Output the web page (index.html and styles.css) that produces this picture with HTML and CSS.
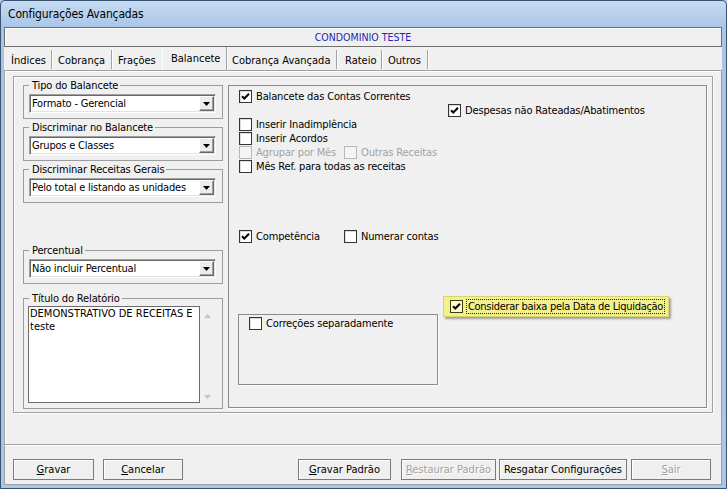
FILE: index.html
```html
<!DOCTYPE html>
<html lang="pt-BR">
<head>
<meta charset="utf-8">
<title>Configurações Avançadas</title>
<link rel="stylesheet" href="styles.css">
</head>
<body>
<div class="window">
  <div class="titlebar">Configurações Avançadas</div>
  <div class="client">
    <div class="company">CONDOMINIO TESTE</div>
    <div class="tabs">
      <div class="tab t-indices">Índices</div>
      <div class="tab t-cobranca">Cobrança</div>
      <div class="tab t-fracoes">Frações</div>
      <div class="tab t-balancete active">Balancete</div>
      <div class="tab t-cobav">Cobrança Avançada</div>
      <div class="tab t-rateio">Rateio</div>
      <div class="tab t-outros">Outros</div>
    </div>
    <div class="page">
      <div class="frame">
        <div class="leftcol">
          <fieldset class="group">
            <legend>Tipo do Balancete</legend>
            <div class="combo"><span class="combo-text">Formato - Gerencial</span><span class="combo-btn"><svg width="7" height="4" viewBox="0 0 7 4"><path d="M0 0h7L3.5 4z" fill="#000"/></svg></span></div>
          </fieldset>
          <fieldset class="group">
            <legend>Discriminar no Balancete</legend>
            <div class="combo"><span class="combo-text">Grupos e Classes</span><span class="combo-btn"><svg width="7" height="4" viewBox="0 0 7 4"><path d="M0 0h7L3.5 4z" fill="#000"/></svg></span></div>
          </fieldset>
          <fieldset class="group">
            <legend>Discriminar Receitas Gerais</legend>
            <div class="combo"><span class="combo-text">Pelo total e listando as unidades</span><span class="combo-btn"><svg width="7" height="4" viewBox="0 0 7 4"><path d="M0 0h7L3.5 4z" fill="#000"/></svg></span></div>
          </fieldset>
          <fieldset class="group g-percentual">
            <legend>Percentual</legend>
            <div class="combo"><span class="combo-text">Não incluir Percentual</span><span class="combo-btn"><svg width="7" height="4" viewBox="0 0 7 4"><path d="M0 0h7L3.5 4z" fill="#000"/></svg></span></div>
          </fieldset>
          <fieldset class="group g-titulo">
            <legend>Título do Relatório</legend>
            <div class="memo">
              <div class="memo-text">
                <div>DEMONSTRATIVO DE RECEITAS E</div>
                <div>teste</div>
              </div>
              <div class="memo-scroll">
                <svg width="7" height="4" viewBox="0 0 7 4"><path d="M0 4h7L3.5 0z" fill="#c4c4c4"/></svg>
                <svg width="7" height="4" viewBox="0 0 7 4"><path d="M0 0h7L3.5 4z" fill="#c4c4c4"/></svg>
              </div>
            </div>
          </fieldset>
        </div>
        <div class="panel">
          <div class="cbrow"><span class="cb"><svg width="11" height="11" viewBox="0 0 11 11"><path d="M2 5.2L4.3 7.5L9 2.8" stroke="#000" stroke-width="2" fill="none"/></svg></span>Balancete das Contas Correntes</div>
          <div class="cbrow ind"><span class="cb"><svg width="11" height="11" viewBox="0 0 11 11"><path d="M2 5.2L4.3 7.5L9 2.8" stroke="#000" stroke-width="2" fill="none"/></svg></span>Despesas não Rateadas/Abatimentos</div>
          <div class="cbrow"><span class="cb"></span>Inserir Inadimplência</div>
          <div class="cbrow"><span class="cb"></span>Inserir Acordos</div>
          <div class="cbrow disabled"><span class="item w105"><span class="cb"></span>Agrupar por Mês</span><span class="item"><span class="cb"></span>Outras Receitas</span></div>
          <div class="cbrow"><span class="cb"></span>Mês Ref. para todas as receitas</div>
          <div class="cbrow r-comp"><span class="item w105"><span class="cb"><svg width="11" height="11" viewBox="0 0 11 11"><path d="M2 5.2L4.3 7.5L9 2.8" stroke="#000" stroke-width="2" fill="none"/></svg></span>Competência</span><span class="item"><span class="cb"></span>Numerar contas</span></div>
          <div class="bottomrow">
            <div class="subgroup">
              <div class="cbrow"><span class="cb"></span>Correções separadamente</div>
            </div>
            <div class="focusbox">
              <span class="cb cb-focus"><svg width="11" height="11" viewBox="0 0 11 11"><path d="M2 5.2L4.3 7.5L9 2.8" stroke="#000" stroke-width="2" fill="none"/></svg></span><span class="focustext">Considerar baixa pela Data de Liquidação</span>
            </div>
          </div>
        </div>
      </div>
    </div>
    <div class="bar">
      <div class="btn b-gravar"><span><u>G</u>ravar</span></div>
      <div class="btn b-cancelar"><span><u>C</u>ancelar</span></div>
      <div class="btn b-gpadrao"><span><u>G</u>ravar Padrão</span></div>
      <div class="btn b-restaurar disabled"><span><u>R</u>estaurar Padrão</span></div>
      <div class="btn b-resgatar"><span>Resgatar Configurações</span></div>
      <div class="btn b-sair disabled"><span><u>S</u>air</span></div>
    </div>
  </div>
</div>
</body>
</html>
```

FILE: styles.css
```css
* { box-sizing: border-box; }
html, body { margin: 0; padding: 0; }
body {
  width: 727px;
  height: 489px;
  overflow: hidden;
  font-family: "DejaVu Sans Condensed", "Liberation Sans", sans-serif;
  font-size: 11px;
  letter-spacing: -0.15px;
  color: #000;
  background: #a9c6e8;
}
.window {
  width: 727px;
  height: 489px;
  border: 1px solid #3a5573;
  border-radius: 5px 5px 0 0;
  background: linear-gradient(#c7dbf1 0, #a8c5e8 27px, #a9c6e8 100%);
  padding: 0 4px 3px 3px;
  display: flex;
  flex-direction: column;
}
.titlebar {
  height: 26px;
  flex: none;
  display: flex;
  align-items: center;
  padding-left: 4px;
  font-size: 12px;
}
.client {
  flex: 1;
  background: #f0f0f0;
  display: flex;
  flex-direction: column;
}
.company {
  height: 20px;
  flex: none;
  border: 1px solid #6f6f6f;
  box-shadow: inset 1px 1px 0 #fff;
  display: flex;
  align-items: center;
  justify-content: center;
  color: #2626b4;
  font-size: 10.5px;
  letter-spacing: 0;
}
.tabs {
  height: 23px;
  flex: none;
  display: flex;
  align-items: flex-end;
  padding-left: 1px;
}
.tab {
  height: 19px;
  line-height: 19px;
  padding-top: 1px;
  white-space: nowrap;
  overflow: hidden;
  border-right: 1px solid #a0a0a0;
  box-shadow: 1px 0 0 #fff;
  margin-bottom: 1px;
  letter-spacing: 0;
}
.t-indices { width: 47px; padding-left: 6px; }
.t-cobranca { width: 60px; padding-left: 6px; }
.t-fracoes { width: 50px; padding-left: 6px; border-right: none; box-shadow: none; }
.t-balancete { width: 65px; padding-left: 9px; }
.tab.active { height: 23px; line-height: 21px; margin-bottom: 0; border-left: 1px solid #fff; padding-left: 8px; }
.t-cobav { width: 110px; padding-left: 5px; }
.t-rateio { width: 45px; padding-left: 8px; }
.t-outros { width: 46px; padding-left: 6px; }

.page {
  height: 375px;
  flex: none;
  border: 1px solid #a0a0a0;
  box-shadow: inset 1px 1px 0 #fff;
  padding: 5px 0 0 8px;
}
.frame {
  width: 700px;
  height: 337px;
  border: 1px solid #a0a0a0;
  box-shadow: inset 1px 1px 0 #fff, 1px 1px 0 #fff;
  display: grid;
  grid-template-columns: 200px 479px;
  column-gap: 5px;
  padding: 2px 5px 3px 9px;
  align-items: start;
}
.leftcol {
  display: flex;
  flex-direction: column;
  gap: 2px;
}
.group {
  margin: 0;
  min-width: 0;
  padding: 0 6px 5px 5px;
  border: 1px solid #9c9c9c;
}
.group legend {
  padding: 0 2px 0 3px;
  margin-left: 0;
  line-height: 13px;
  height: 13px;
}
.g-percentual { margin-top: 39px; }
.g-titulo { margin-top: 6px; }
.combo {
  margin-top: 2px;
  height: 19px;
  display: flex;
  align-items: center;
  background: #fff;
  border: 1px solid;
  border-color: #a0a0a0 #fff #fff #a0a0a0;
  box-shadow: inset 1px 1px 0 #696969, inset -1px -1px 0 #e3e3e3;
  padding: 1px;
}
.combo-text {
  padding-left: 1px;
  white-space: nowrap;
  overflow: hidden;
  letter-spacing: -0.2px;
}
.combo-btn {
  margin-left: auto;
  flex: none;
  width: 15px;
  height: 15px;
  display: flex;
  align-items: center;
  justify-content: center;
  background: #ececec;
  border: 1px solid;
  border-color: #fff #696969 #696969 #fff;
  box-shadow: inset -1px -1px 0 #a0a0a0;
}
.memo {
  margin-top: 1px;
  margin-left: -1px;
  height: 97px;
  display: flex;
}
.memo-text {
  width: 172px;
  border: 1px solid #6b6b6b;
  background: #fff;
  padding-left: 1px;
  line-height: 13px;
  letter-spacing: 0;
}
.memo-scroll {
  width: 15px;
  display: flex;
  flex-direction: column;
  align-items: center;
  justify-content: space-between;
  padding: 8px 0 4px;
}

.panel {
  margin-top: 6px;
  height: 323px;
  border: 1px solid #8a8a8a;
  box-shadow: 1px 1px 0 #fff;
  padding: 3px 0 0 10px;
  display: flex;
  flex-direction: column;
}
.cbrow {
  height: 14px;
  display: flex;
  align-items: center;
  white-space: nowrap;
}
.item {
  display: flex;
  align-items: center;
}
.w105 { width: 105px; }
.ind { margin-left: 209px; }
.cb {
  flex: none;
  width: 13px;
  height: 13px;
  margin-right: 4px;
  border: 1px solid #333;
  background: #fff;
  box-shadow: inset 1px 1px 0 #dcdcdc;
  display: flex;
  align-items: center;
  justify-content: center;
}
.disabled { color: #a3a3a3; }
.disabled .cb { border-color: #b8b8b8; background: #f4f4f4; box-shadow: none; }
.r-comp { margin-top: 56px; }
.bottomrow {
  margin-top: 53px;
  margin-left: -1px;
  display: flex;
  align-items: flex-start;
}
.subgroup {
  margin-top: 18px;
  width: 200px;
  height: 71px;
  border: 1px solid #8a8a8a;
  box-shadow: 1px 1px 0 #fff;
  padding: 1px 0 0 10px;
}
.focusbox {
  margin-left: 5px;
  width: 226px;
  height: 21px;
  display: flex;
  align-items: center;
  padding-left: 6px;
  background: #f3f18b;
  border: 1px solid #d9d56c;
  box-shadow: 2px 2px 2px rgba(0, 0, 0, 0.35);
  white-space: nowrap;
}
.cb-focus {
  border-color: #3d3c0a;
  background: #fbfad2;
  box-shadow: none;
  margin-right: 3px;
}
.focustext {
  border: 1px dotted #222;
  padding: 0 1px;
  line-height: 13px;
  letter-spacing: -0.3px;
}

.bar {
  height: 40px;
  flex: none;
  display: flex;
  align-items: flex-start;
  border: 1px solid #a0a0a0;
  border-top: 1px solid #fff;
  padding: 13px 10px 0 8px;
}
.btn {
  height: 21px;
  border: 1px solid #7a7a7a;
  background: #efefef;
  box-shadow: inset 1px 1px 0 #fff;
  display: flex;
  align-items: center;
  justify-content: center;
  white-space: nowrap;
  letter-spacing: 0;
}
.btn.disabled { color: #a0a0a0; text-shadow: 1px 1px 0 #fff; }
.b-gravar { width: 81px; }
.b-cancelar { width: 80px; margin-left: 9px; }
.b-gpadrao { width: 93px; margin-left: auto; }
.b-restaurar { width: 95px; margin-left: 10px; }
.b-resgatar { width: 128px; margin-left: 3px; }
.b-sair { width: 80px; margin-left: 4px; }
```
